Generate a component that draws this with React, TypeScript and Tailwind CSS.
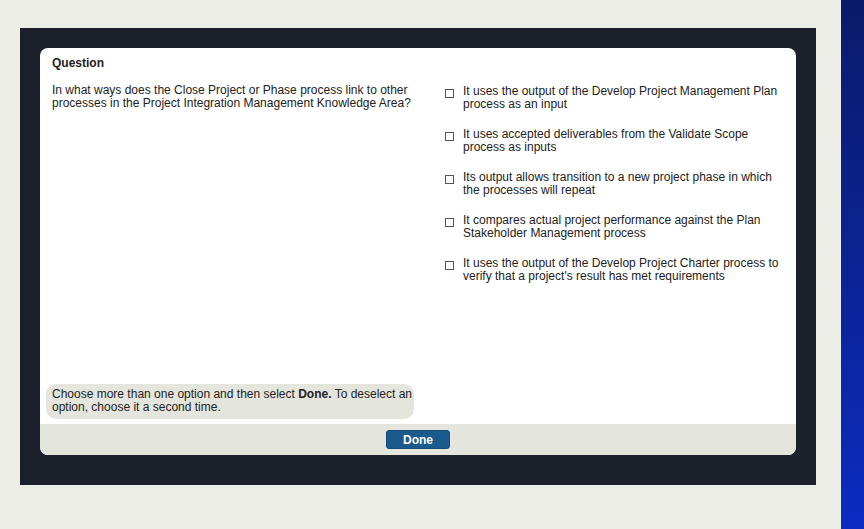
const options = [
  'It uses the output of the Develop Project Management Plan process as an input',
  'It uses accepted deliverables from the Validate Scope process as inputs',
  'Its output allows transition to a new project phase in which the processes will repeat',
  'It compares actual project performance against the Plan Stakeholder Management process',
  "It uses the output of the Develop Project Charter process to verify that a project's result has met requirements",
];

export default function App() {
  return (
    <div className="w-[864px] h-[529px] bg-[#eeeee9] flex font-['Liberation_Sans',Arial,sans-serif] text-[12px] leading-[13px] text-[#222]">
      <div className="pt-[28px] pl-[20px]">
        <div className="w-[796px] h-[457px] bg-[#1c202a] p-[20px]">
          <div className="w-[756px] h-[407px] rounded-[8px] bg-white flex flex-col overflow-hidden">
            <div className="flex-1 flex">
              <div className="w-[395px] flex flex-col">
                <div className="pl-[12px] pt-[8px] font-bold leading-[14px]">Question</div>
                <p className="pl-[12px] pt-[14px] pr-[4px]">
                  In what ways does the Close Project or Phase process link to other processes in the Project Integration Management Knowledge Area?
                </p>
                <div className="mt-auto mb-[5px] ml-[6px] w-[368px] h-[35px] rounded-[10px] bg-[#e4e6de] pl-[6px] pr-[1px] pt-[4px]">
                  Choose more than one option and then select <b>Done.</b> To deselect an option, choose it a second time.
                </div>
              </div>
              <div className="flex-1 pt-[37px] pl-[10px] pr-[14px] flex flex-col gap-[17px]">
                {options.map((o) => (
                  <label key={o} className="flex items-start gap-[9px]">
                    <span className="mt-[4px] w-[9px] h-[9px] shrink-0 border border-[#555] bg-white" />
                    <span>{o}</span>
                  </label>
                ))}
              </div>
            </div>
            <div className="h-[31px] bg-[#e4e6de] flex items-center justify-center">
              <button className="w-[64px] h-[19px] rounded-[3px] bg-[#1b5a8c] border border-[#154a75] text-white font-bold text-[12px] leading-none">
                Done
              </button>
            </div>
          </div>
        </div>
      </div>
      <div className="ml-auto w-[23px] h-full bg-gradient-to-b from-[#0b1a6a] to-[#0a2cc2]" />
    </div>
  );
}
